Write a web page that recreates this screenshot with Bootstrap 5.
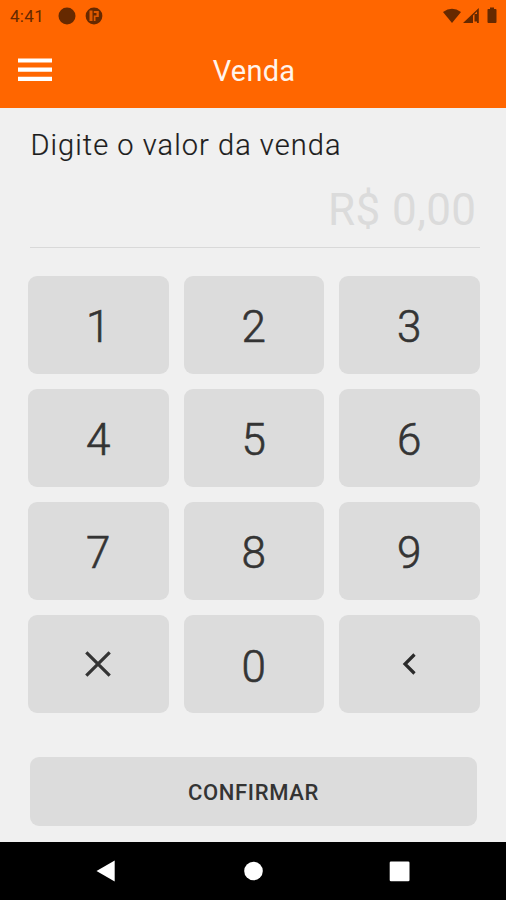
<!DOCTYPE html>
<html lang="pt-BR">
<head>
<meta charset="utf-8">
<meta name="viewport" content="width=device-width, initial-scale=1">
<title>Venda</title>
<link href="https://cdn.jsdelivr.net/npm/bootstrap@5.3.0/dist/css/bootstrap.min.css" rel="stylesheet">
<style>
body{font-family:Roboto,"Liberation Sans",sans-serif;background:#f0f0f0;height:900px;overflow:hidden}
svg{display:block}
.app-head{background:#ff6600;height:108px}
.status-bar{height:32px;padding:0 8px 0 10px;color:#662900}
.clock{font-size:17px;line-height:32px;letter-spacing:.3px;width:48px;font-weight:400}
.title-bar{height:76px;display:grid;grid-template-columns:1fr auto 1fr;padding:0 18px}
.page-title{font-size:29px;line-height:74px;letter-spacing:.2px;color:#fff4ec;font-weight:400;padding:2px 0 0 2px}
.sale-form{height:734px;padding:0 26.5px 0 28px}
.prompt-label{font-size:29px;line-height:36px;letter-spacing:1.05px;color:#1c1c1c;font-weight:300;-webkit-text-stroke:.2px #1c1c1c;margin:19px 0 0 2.5px;white-space:nowrap}
.amount{font-size:44px;line-height:56px;letter-spacing:.4px;color:#dbdbdb;text-align:right;margin:19px 0 0 2px;padding:0 3px 9px 0;height:66px;border-bottom:1.5px solid #d9d9d9}
.keypad{display:grid;grid-template-columns:repeat(3,1fr);grid-auto-rows:98px;gap:15.2px 15px;margin-top:27.6px}
.key,.confirm{--bs-btn-bg:#dcdcdc;--bs-btn-color:#343434;--bs-btn-border-width:0;--bs-btn-border-radius:9px;--bs-btn-hover-bg:#d2d2d2;--bs-btn-active-bg:#cacaca;--bs-btn-padding-x:0;--bs-btn-padding-y:0}
.key{--bs-btn-font-size:44px;--bs-btn-line-height:1;--bs-btn-font-weight:300}
.digit{padding-top:5px;-webkit-text-stroke:.6px #343434}
.confirm{--bs-btn-font-size:22px;--bs-btn-font-weight:500;letter-spacing:.65px;height:69px;margin:44px 2.5px 0 2px;padding-top:2px;width:447px}
.system-nav{height:58px;background:#000}
</style>
<script src="https://cdn.jsdelivr.net/npm/bootstrap@5.3.0/dist/js/bootstrap.bundle.min.js"></script>
</head>
<body>
<header class="app-head">
  <div class="status-bar d-flex align-items-center">
    <span class="clock">4:41</span>
    <svg width="18" height="18" viewBox="0 0 18 18"><circle cx="9" cy="9" r="8.5" fill="#662900"/></svg>
    <svg class="ms-2" width="20" height="18" viewBox="0 0 20 18"><circle cx="10" cy="9" r="8.400" fill="#662900"/><path d="M5.500 3.500H8.500V14H5.500ZM9.800 4H14.800V10H11.500V14H9.800V8.500H12.500V6H9.800Z" fill="#ff6600" opacity=".8"/></svg>
    <svg class="ms-auto" width="56" height="20" viewBox="0 0 56 20"><g fill="#662900"><path d="M1 6Q10 -.5 19 6L10 17Z"/><path d="M21 17 36.800 2V17H31V9.500L35 5.500V8H32.500V15.500H35V17Z" fill-rule="evenodd"/><path d="M46 3H48V1.500H52V3H53.500Q54.500 3 54.500 4V16Q54.500 17 53.500 17H46.500Q45.500 17 45.500 16V4Q45.500 3 46 3Z"/></g></svg>
  </div>
  <div class="title-bar align-items-center">
    <button class="btn p-0 border-0 text-start" type="button" aria-label="Menu"><svg width="34" height="24" viewBox="0 0 34 24"><path d="M0 2.500H34M0 11.700H34M0 20.900H34" stroke="#fff" stroke-width="4.200"/></svg></button>
    <h1 class="page-title m-0">Venda</h1>
  </div>
</header>
<main class="sale-form d-flex flex-column">
  <h2 class="prompt-label mb-0">Digite o valor da venda</h2>
  <div class="amount">R$ 0,00</div>
  <div class="keypad">
    <button class="btn key digit" type="button">1</button>
    <button class="btn key digit" type="button">2</button>
    <button class="btn key digit" type="button">3</button>
    <button class="btn key digit" type="button">4</button>
    <button class="btn key digit" type="button">5</button>
    <button class="btn key digit" type="button">6</button>
    <button class="btn key digit" type="button">7</button>
    <button class="btn key digit" type="button">8</button>
    <button class="btn key digit" type="button">9</button>
    <button class="btn key" type="button" aria-label="Limpar"><svg class="mx-auto" width="28" height="28" viewBox="0 0 28 28"><path d="M2.300 2.300 25.700 25.700M25.700 2.300 2.300 25.700" stroke="#343434" stroke-width="3.200"/></svg></button>
    <button class="btn key digit" type="button">0</button>
    <button class="btn key" type="button" aria-label="Apagar"><svg class="mx-auto" width="14" height="22" viewBox="0 0 14 22"><path d="M12.500 1.500 3 11 12.500 20.500" fill="none" stroke="#2b2b2b" stroke-width="3.200"/></svg></button>
  </div>
  <button class="btn confirm" type="button">CONFIRMAR</button>
</main>
<nav class="system-nav">
  <svg width="506" height="58" viewBox="0 0 506 58" fill="#fff"><path d="M96.500 29 114.700 18.500V39.500Z"/><circle cx="253.500" cy="29" r="9.300"/><rect x="389.700" y="19.500" width="19.800" height="19.800" rx="1.300"/></svg>
</nav>
</body>
</html>
